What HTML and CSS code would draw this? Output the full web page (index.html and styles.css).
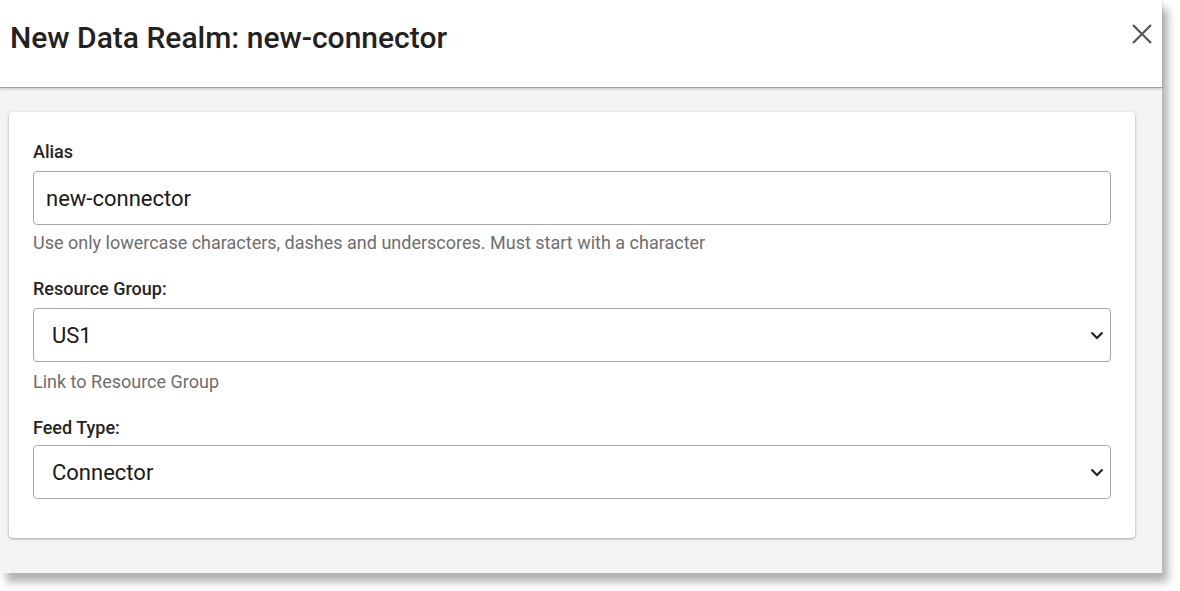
FILE: index.html
```html
<!DOCTYPE html>
<html>
<head>
<meta charset="utf-8">
<link rel="stylesheet" href="styles.css">
</head>
<body>
<div class="dialog">
  <header class="dialog-header">
    <h1 class="title">New Data Realm: new-connector</h1>
    <button class="close" aria-label="Close">
      <svg width="20" height="20" viewBox="0 0 20 20"><path d="M1 1 L19 19 M19 1 L1 19" stroke="#555" stroke-width="2.2" fill="none"/></svg>
    </button>
  </header>
  <div class="dialog-body">
    <div class="card">
      <div class="group">
        <label class="label">Alias</label>
        <div class="field">new-connector</div>
        <div class="help">Use only lowercase characters, dashes and underscores. Must start with a character</div>
      </div>
      <div class="group">
        <label class="label">Resource Group:</label>
        <div class="field select"><span>US1</span>
          <svg class="chev" width="14" height="9" viewBox="0 0 14 9"><path d="M1.5 1.5 L7 7 L12.5 1.5" stroke="#222" stroke-width="2.2" fill="none"/></svg>
        </div>
        <div class="help link">Link to Resource Group</div>
      </div>
      <div class="group last">
        <label class="label">Feed Type:</label>
        <div class="field select"><span>Connector</span>
          <svg class="chev" width="14" height="9" viewBox="0 0 14 9"><path d="M1.5 1.5 L7 7 L12.5 1.5" stroke="#222" stroke-width="2.2" fill="none"/></svg>
        </div>
      </div>
    </div>
  </div>
</div>
</body>
</html>
```

FILE: styles.css
```css
html, body {
  margin: 0;
  padding: 0;
  background: #ffffff;
}
body {
  font-family: Roboto, "Liberation Sans", sans-serif;
  color: #212121;
  height: 591px;
}
.dialog {
  width: 1162px;
  height: 573px;
  display: flex;
  flex-direction: column;
  background: #f4f4f4;
  box-shadow: 6px 9px 8px rgba(0,0,0,0.3);
}
.dialog-header {
  height: 88px;
  box-sizing: border-box;
  background: #fff;
  display: flex;
  justify-content: space-between;
  align-items: flex-start;
  padding: 18px 10px 0 10px;
  border-bottom: 1px solid #a0a0a0;
  box-shadow: 0 1px 3px rgba(0,0,0,0.2);
  position: relative;
  z-index: 1;
}
.title {
  margin: 0;
  font-size: 30px;
  font-weight: 500;
  line-height: 40px;
  color: #222;
}
.close {
  border: none;
  background: none;
  padding: 0;
  margin: 6px 0 0 0;
  width: 20px;
  height: 20px;
  cursor: pointer;
}
.close svg { display: block; }
.dialog-body {
  flex: 1;
  padding: 24px 27px 0 9px;
}
.card {
  background: #fff;
  border-radius: 4px;
  box-shadow: 0 1px 3px rgba(0,0,0,0.35);
  padding: 28px 24px 39px 24px;
}
.group {
  margin-bottom: 22px;
}
.group.last { margin-bottom: 0; }
.label {
  display: block;
  font-size: 18px;
  font-weight: 500;
  line-height: 24px;
  margin-bottom: 7px;
  color: #262626;
}
.group.last .label {
  margin-top: 2px;
  margin-bottom: 5px;
}
.field {
  height: 54px;
  box-sizing: border-box;
  border: 1px solid #a8a8a8;
  border-radius: 4px;
  padding: 0 12px;
  font-size: 22px;
  display: flex;
  align-items: center;
  color: #1a1a1a;
}
.field.select {
  padding: 0 6px 0 18px;
  justify-content: space-between;
}
.chev { display: block; }
.help {
  font-size: 18px;
  line-height: 24px;
  margin-top: 6px;
  color: #6e6e6e;
}
.help.link {
  margin-top: 8px;
}
```
